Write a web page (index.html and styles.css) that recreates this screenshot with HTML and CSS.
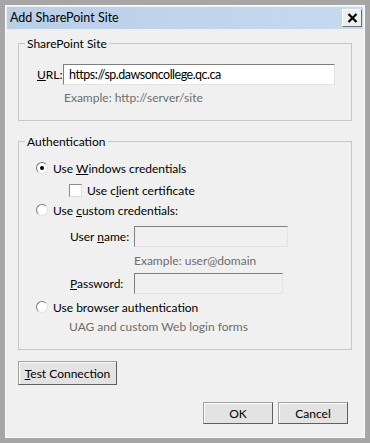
FILE: index.html
```html
<!DOCTYPE html>
<html lang="en">
<head>
    <meta charset="UTF-8">
    <title>Add SharePoint Site</title>
    <link rel="stylesheet" href="styles.css">
</head>
<body>
    <div class="window">
        <div class="titlebar">
            <span class="title">Add SharePoint Site</span>
            <span class="close">
                <svg width="11" height="10" viewBox="0 0 11 10">
                    <path d="M1.5 1 L9.5 9 M9.5 1 L1.5 9" stroke="#000" stroke-width="2.2" fill="none"/>
                </svg>
            </span>
        </div>

        <div class="content">
            <!-- サイト -->
            <fieldset class="group">
                <legend>SharePoint Site</legend>
                <div class="group-body site-body">
                    <div class="row url-row">
                        <label class="url-label"><u>U</u>RL:</label>
                        <input class="textbox url-box" type="text" value="https://sp.dawsoncollege.qc.ca">
                    </div>
                    <div class="hint url-hint">Example: http://server/site</div>
                </div>
            </fieldset>

            <!-- 認証 -->
            <fieldset class="group auth">
                <legend>Authentication</legend>
                <div class="group-body auth-body">
                    <div class="row opt">
                        <span class="radio checked"></span>
                        <span>Use <u>W</u>indows credentials</span>
                    </div>
                    <div class="row opt sub-opt">
                        <span class="check"></span>
                        <span>Use c<u>l</u>ient certificate</span>
                    </div>
                    <div class="row opt">
                        <span class="radio"></span>
                        <span>Use <u>c</u>ustom credentials:</span>
                    </div>
                    <div class="row field-row user-row">
                        <label class="field-label">User <u>n</u>ame:</label>
                        <input class="textbox disabled user-box" type="text">
                    </div>
                    <div class="hint user-hint">Example: user@domain</div>
                    <div class="row field-row pass-row">
                        <label class="field-label"><u>P</u>assword:</label>
                        <input class="textbox disabled pass-box" type="password">
                    </div>
                    <div class="row opt browser-opt">
                        <span class="radio"></span>
                        <span>Use browser authentication</span>
                    </div>
                    <div class="hint uag-hint">UAG and custom Web login forms</div>
                </div>
            </fieldset>

            <button class="btn test-btn"><u>T</u>est Connection</button>

            <div class="actions">
                <button class="btn">OK</button>
                <button class="btn">Cancel</button>
            </div>
        </div>
    </div>
</body>
</html>
```

FILE: styles.css
```css
/* 全体 */
* {
    box-sizing: border-box;
}

body {
    margin: 0;
    font-family: Lato, "Noto Sans", sans-serif;
    font-size: 12px;
    color: #000;
    background-color: #a6a6a6;
}

u {
    text-underline-offset: 1px;
}

/* ウィンドウ枠 */
.window {
    width: 370px;
    height: 443px;
    border: 5px solid #a6a6a6;
    padding: 2px;
    background-color: #f0f0f0;
    box-shadow: inset 0 0 0 1px #fafafa;
    display: flex;
    flex-direction: column;
}

/* タイトルバー */
.titlebar {
    height: 22px;
    flex: none;
    display: flex;
    align-items: flex-start;
    justify-content: space-between;
    padding: 0 1px 0 3px;
    background: linear-gradient(90deg, #b9cfe8, #c7d9ee);
}

.title {
    font-size: 12.5px;
    line-height: 22px;
}

.close {
    width: 20px;
    height: 18px;
    margin-top: 2px;
    display: flex;
    align-items: center;
    justify-content: center;
    background-color: #eeeeee;
    border: 1px solid;
    border-color: #fdfdfd #6f6f6f #6f6f6f #fdfdfd;
}

/* 本体 */
.content {
    flex: 1;
    display: flex;
    flex-direction: column;
    padding: 7px 11px 0;
}

.group {
    margin: 0;
    padding: 0;
    min-width: 0;
    border: 1px solid #c6c6c6;
}

.group legend {
    margin-left: 6px;
    padding: 0 2px;
    line-height: 15px;
}

.auth {
    margin-top: 13px;
}

.site-body {
    padding: 13px 16px 15px 18px;
}

.auth-body {
    padding: 9px 16px 14px 17px;
}

.row {
    display: flex;
    align-items: center;
    white-space: nowrap;
}

.url-row {
    height: 21px;
}

.url-label {
    flex: none;
    width: 26px;
}

/* テキストボックス */
.textbox {
    flex: none;
    height: 21px;
    margin: 0;
    padding: 0 5px;
    font: inherit;
    color: #000;
    background-color: #fff;
    border: 1px solid;
    border-color: #7f7f7f #e3e3e3 #e3e3e3 #7f7f7f;
    outline: none;
}

.textbox.disabled {
    background-color: #f0f0f0;
}

.url-box {
    width: 272px;
    font-size: 12.5px;
    letter-spacing: -0.5px;
}

.user-box {
    width: 154px;
}

.pass-box {
    width: 149px;
}

/* 補足テキスト */
.hint {
    color: #6d6d6d;
    line-height: 15px;
    white-space: nowrap;
}

.url-hint {
    margin-top: 5px;
    margin-left: 27px;
}

.user-hint {
    margin-top: 6px;
    margin-left: 98px;
    line-height: 16px;
}

.uag-hint {
    margin-top: 2px;
    margin-left: 33px;
    line-height: 16px;
}

/* ラジオとチェック */
.opt {
    height: 20px;
}

.sub-opt {
    margin-top: 2px;
    padding-left: 33px;
}

.browser-opt {
    margin-top: 3px;
}

.radio {
    flex: none;
    width: 12px;
    height: 12px;
    margin-right: 5px;
    border-radius: 50%;
    border: 1px solid;
    border-color: #7a7a7a #e2e2e2 #e2e2e2 #7a7a7a;
    background-color: #fff;
    display: flex;
    align-items: center;
    justify-content: center;
}

.radio.checked::after {
    content: "";
    width: 4px;
    height: 4px;
    border-radius: 50%;
    background-color: #000;
}

.check {
    flex: none;
    width: 13px;
    height: 13px;
    margin-right: 5px;
    border: 1px solid;
    border-color: #8a8a8a #dcdcdc #dcdcdc #8a8a8a;
    background-color: #fff;
}

/* ユーザー名・パスワード */
.field-row {
    height: 21px;
    padding-left: 34px;
}

.user-row {
    margin-top: 6px;
}

.pass-row {
    margin-top: 4px;
}

.field-label {
    flex: none;
    width: 64px;
}

/* ボタン */
.btn {
    margin: 0;
    padding: 0;
    font: inherit;
    color: #000;
    background-color: #e3e3e3;
    border: 1px solid;
    border-color: #a0a0a0 #5f5f5f #5f5f5f #a0a0a0;
    box-shadow: inset 1px 1px 0 #fdfdfd;
    cursor: pointer;
}

.test-btn {
    align-self: flex-start;
    width: 99px;
    height: 24px;
    margin-top: 11px;
}

.actions {
    display: flex;
    justify-content: flex-end;
    gap: 5px;
    margin-top: 17px;
    padding-right: 4px;
}

.actions .btn {
    width: 70px;
    height: 22px;
}
```
